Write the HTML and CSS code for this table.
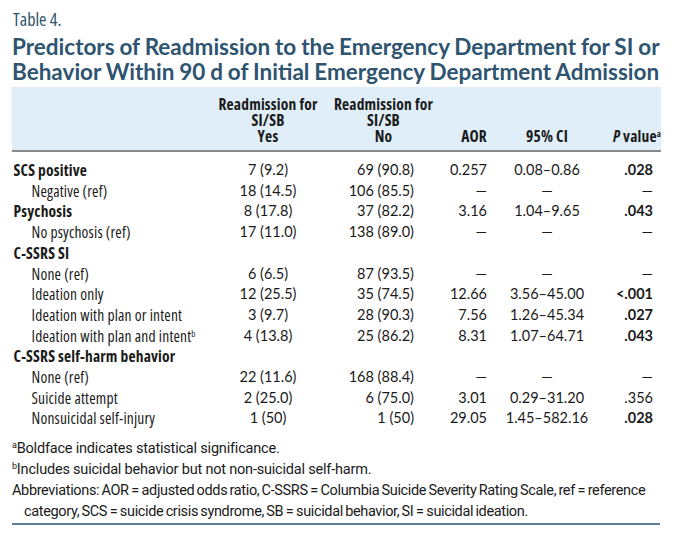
FILE: index.html
```html
<!DOCTYPE html>
<html>
<head>
<meta charset="utf-8">
<link rel="stylesheet" href="styles.css">
</head>
<body>
<div class="wrap">
  <div class="label">Table 4.</div>
  <h1 class="title">Predictors of Readmission to the Emergency Department for SI or<br>Behavior Within 90 d of Initial Emergency Department Admission</h1>
  <table class="tbl">
    <thead>
      <tr>
        <th class="c-lab"></th>
        <th class="c-yes"><span class="hd">Readmission for<br>SI/SB<br>Yes</span></th>
        <th class="c-no"><span class="hd">Readmission for<br>SI/SB<br>No</span></th>
        <th class="c-aor">AOR</th>
        <th class="c-ci">95% CI</th>
        <th class="c-p"><i>P</i> value<sup>a</sup></th>
      </tr>
    </thead>
    <tbody>
      <tr><td class="c-lab b">SCS positive</td><td class="c-yes">7 (9.2)</td><td class="c-no">69 (90.8)</td><td class="c-aor">0.257</td><td class="c-ci">0.08–0.86</td><td class="c-p b">.028</td></tr>
      <tr><td class="c-lab ind">Negative (ref)</td><td class="c-yes">18 (14.5)</td><td class="c-no">106 (85.5)</td><td class="c-aor">—</td><td class="c-ci">—</td><td class="c-p">—</td></tr>
      <tr><td class="c-lab b">Psychosis</td><td class="c-yes">8 (17.8)</td><td class="c-no">37 (82.2)</td><td class="c-aor">3.16</td><td class="c-ci">1.04–9.65</td><td class="c-p b">.043</td></tr>
      <tr><td class="c-lab ind">No psychosis (ref)</td><td class="c-yes">17 (11.0)</td><td class="c-no">138 (89.0)</td><td class="c-aor">—</td><td class="c-ci">—</td><td class="c-p">—</td></tr>
      <tr><td class="c-lab b">C-SSRS SI</td><td class="c-yes"></td><td class="c-no"></td><td class="c-aor"></td><td class="c-ci"></td><td class="c-p"></td></tr>
      <tr><td class="c-lab ind">None (ref)</td><td class="c-yes">6 (6.5)</td><td class="c-no">87 (93.5)</td><td class="c-aor">—</td><td class="c-ci">—</td><td class="c-p">—</td></tr>
      <tr><td class="c-lab ind">Ideation only</td><td class="c-yes">12 (25.5)</td><td class="c-no">35 (74.5)</td><td class="c-aor">12.66</td><td class="c-ci">3.56–45.00</td><td class="c-p b">&lt;.001</td></tr>
      <tr><td class="c-lab ind">Ideation with plan or intent</td><td class="c-yes">3 (9.7)</td><td class="c-no">28 (90.3)</td><td class="c-aor">7.56</td><td class="c-ci">1.26–45.34</td><td class="c-p b">.027</td></tr>
      <tr><td class="c-lab ind">Ideation with plan and intent<sup>b</sup></td><td class="c-yes">4 (13.8)</td><td class="c-no">25 (86.2)</td><td class="c-aor">8.31</td><td class="c-ci">1.07–64.71</td><td class="c-p b">.043</td></tr>
      <tr><td class="c-lab b">C-SSRS self-harm behavior</td><td class="c-yes"></td><td class="c-no"></td><td class="c-aor"></td><td class="c-ci"></td><td class="c-p"></td></tr>
      <tr><td class="c-lab ind">None (ref)</td><td class="c-yes">22 (11.6)</td><td class="c-no">168 (88.4)</td><td class="c-aor">—</td><td class="c-ci">—</td><td class="c-p">—</td></tr>
      <tr><td class="c-lab ind">Suicide attempt</td><td class="c-yes">2 (25.0)</td><td class="c-no">6 (75.0)</td><td class="c-aor">3.01</td><td class="c-ci">0.29–31.20</td><td class="c-p">.356</td></tr>
      <tr><td class="c-lab ind">Nonsuicidal self-injury</td><td class="c-yes">1 (50)</td><td class="c-no">1 (50)</td><td class="c-aor">29.05</td><td class="c-ci">1.45–582.16</td><td class="c-p b">.028</td></tr>
    </tbody>
  </table>
  <div class="notes">
    <p><sup>a</sup>Boldface indicates statistical significance.</p>
    <p><sup>b</sup>Includes suicidal behavior but not non-suicidal self-harm.</p>
    <p class="hang">Abbreviations: AOR&thinsp;=&thinsp;adjusted odds ratio, C-SSRS&thinsp;=&thinsp;Columbia Suicide Severity Rating Scale, ref&thinsp;=&thinsp;reference category, SCS&thinsp;=&thinsp;suicide crisis syndrome, SB&thinsp;=&thinsp;suicidal behavior, SI&thinsp;=&thinsp;suicidal ideation.</p>
  </div>
</div>
</body>
</html>
```
FILE: styles.css
```css
html, body {
  margin: 0;
  padding: 0;
  background: #ffffff;
}
.wrap {
  width: 648px;
  margin-left: 12px;
  padding-top: 7px;
  font-family: "Open Sans", "DejaVu Sans", sans-serif;
  font-stretch: 75%;
  color: #1a1a1a;
}
.label {
  font-size: 18px;
  color: #2e5470;
  line-height: 24px;
  padding-left: 1px;
}
.title {
  margin: 3px 0 3px 0;
  font-family: "Lato", "Open Sans", sans-serif;
  font-stretch: normal;
  font-weight: 700;
  font-size: 22.5px;
  line-height: 25px;
  color: #2e5470;
  white-space: nowrap;
  letter-spacing: 0;
  word-spacing: -0.6px;
}
.tbl {
  width: 648px;
  border-collapse: collapse;
  table-layout: fixed;
  font-size: 15.5px;
  letter-spacing: 0.18px;
}
.tbl thead tr {
  background: #dfeef8;
}
.tbl th {
  font-weight: 700;
  line-height: 16px;
  padding: 9px 0 6px 0;
  vertical-align: bottom;
  border-bottom: 2px solid #8a8a8a;
  white-space: nowrap;
}
.tbl th.c-lab {
  border-left: 1px dotted #c6d8e6;
}
.hd {
  display: inline-block;
  text-align: center;
}
.tbl td {
  line-height: 20.7px;
  padding: 0;
  white-space: nowrap;
}
.tbl tbody tr:first-child td {
  padding-top: 8px;
}
.tbl td.c-yes, .tbl td.c-no, .tbl td.c-aor, .tbl td.c-ci, .tbl td.c-p {
  font-family: "Lato", "Open Sans", sans-serif;
  font-stretch: normal;
  font-size: 14.5px;
  letter-spacing: 0;
}
.c-lab { width: 204px; text-align: left; }
.c-yes { width: 102px; text-align: center; }
.c-no { width: 114px; text-align: right; }
.tbl td.c-no { padding-right: 19px; }
.c-aor { width: 54px; text-align: right; }
.c-ci { width: 120px; text-align: center; }
.c-p { width: 54px; text-align: right; }
.tbl td.c-p { padding-right: 8px; }
.tbl th sup, .tbl td sup, .notes sup {
  font-size: 9px;
  vertical-align: 5px;
  line-height: 0;
}
.b { font-weight: 700; }
.tbl td.c-lab { padding-left: 1px; }
.tbl td.ind { padding-left: 19px; }
.notes {
  margin-top: 9px;
  padding-bottom: 1px;
  border-bottom: 2px solid #5b7f99;
  font-family: "Roboto", "Open Sans", sans-serif;
  font-stretch: normal;
  font-size: 14.5px;
  letter-spacing: -0.2px;
  line-height: 21px;
}
.notes p {
  margin: 0;
}
.notes .hang {
  padding-left: 12px;
  text-indent: -12px;
  letter-spacing: -0.35px;
  word-spacing: -1px;
}
```
